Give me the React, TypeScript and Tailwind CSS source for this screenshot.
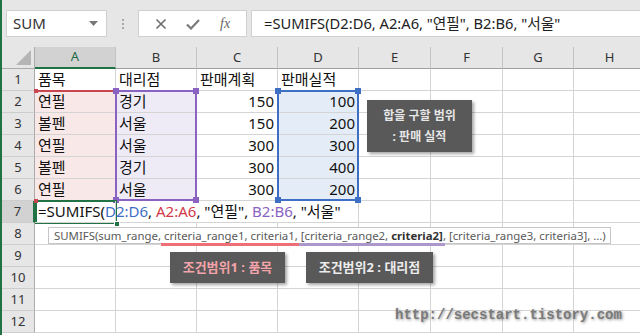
import React from "react";

const colW = ["w-[81px]", "w-[81px]", "w-[81px]", "w-[81px]", "w-[72px]", "w-[72px]", "w-[71px]", "w-[72px]"];
const letters = ["A", "B", "C", "D", "E", "F", "G", "H"];

const fills = ["bg-[#f9e8e8]", "bg-[#efebf6]", "", "bg-[#e4ecf7]"];

const data: string[][] = [
  ["품목", "대리점", "판매계획", "판매실적"],
  ["연필", "경기", "150", "100"],
  ["볼펜", "서울", "150", "200"],
  ["연필", "서울", "300", "300"],
  ["볼펜", "경기", "300", "400"],
  ["연필", "서울", "300", "200"],
];

const cellFont = { fontFamily: '"Noto Sans", "Noto Sans CJK KR", sans-serif' };

function FormulaText() {
  return (
    <>
      =SUMIFS(<span className="text-[#3f6fc4]">D2:D6</span>,{" "}
      <span className="text-[#d2384a]">A2:A6</span>, "연필",{" "}
      <span className="text-[#8a63c2]">B2:B6</span>, "서울"
    </>
  );
}

// coloured range outline with the four corner handles
function RangeBox({ className, handle }: { className: string; handle: string }) {
  return (
    <div className={"absolute border-2 " + className}>
      <span className={"absolute -left-[4px] -top-[4px] w-[6px] h-[6px] " + handle} />
      <span className={"absolute -right-[4px] -top-[4px] w-[6px] h-[6px] " + handle} />
      <span className={"absolute -right-[4px] -bottom-[4px] w-[6px] h-[6px] " + handle} />
      <span className={"absolute -left-[4px] -bottom-[4px] w-[6px] h-[6px] " + handle} />
    </div>
  );
}

function Row({ r }: { r: number }) {
  const vals = data[r - 1];
  const active = r === 7;
  return (
    <div className="flex h-[22px]">
      <div
        className={
          "w-[33px] shrink-0 flex items-center justify-center text-[13px] text-[#333] border-b border-[#cdcdcd] " +
          (active ? "bg-[#d2d2d2] border-r-2 border-r-[#217346]" : "bg-[#e6e6e6] border-r border-r-[#ababab]")
        }
      >
        {r}
      </div>
      {colW.map((w, c) => {
        const numeric = c >= 2 && r > 1;
        const fill = r >= 2 && r <= 6 ? fills[c] || "" : "";
        const noRight = active && (c === 1 || c === 2);
        return (
          <div
            key={c}
            className={
              w +
              " shrink-0 h-[22px] border-b border-[#d4d4d4] flex items-center px-[3px] text-[15px] text-[#111] whitespace-nowrap " +
              (noRight ? "" : "border-r ") +
              fill +
              (numeric ? " justify-end" : "") +
              (active && c === 0 ? " relative z-10 overflow-visible" : " overflow-hidden")
            }
          >
            {vals && c < 4 ? vals[c] : null}
            {active && c === 0 ? (
              <span className="relative z-10">
                <FormulaText />
              </span>
            ) : null}
          </div>
        );
      })}
    </div>
  );
}

export default function App() {
  const rows = Array.from({ length: 12 }, (_, i) => i + 1);
  return (
    <div className="w-[640px] h-[335px] overflow-hidden flex bg-white" style={cellFont}>
      <div className="w-[2px] shrink-0 bg-[#217346]" />
      <div className="flex-1 flex flex-col min-w-0">
        {/* formula bar */}
        <div className="h-[47px] shrink-0 bg-[#e6e6e6] flex items-start pt-[10px]">
          <div className="ml-[4px] w-[101px] h-[27px] bg-white border border-[#d0d0d0] flex items-center justify-between pl-[6px] pr-[8px]">
            <span className="text-[15px] text-[#333]">SUM</span>
            <svg width="9" height="5" viewBox="0 0 9 5">
              <path d="M0 0h9L4.5 5z" fill="#777" />
            </svg>
          </div>
          <div className="w-[31px] h-[27px] flex flex-col items-center justify-center gap-[2px]">
            <span className="w-[2px] h-[2px] bg-[#a8a8a8]" />
            <span className="w-[2px] h-[2px] bg-[#a8a8a8]" />
            <span className="w-[2px] h-[2px] bg-[#a8a8a8]" />
          </div>
          <div className="w-[109px] h-[27px] bg-white border border-[#d0d0d0] flex items-center justify-around px-[6px]">
            <svg width="12" height="12" viewBox="0 0 12 12">
              <path d="M1.5 1.5l9 9M10.5 1.5l-9 9" stroke="#6d6d6d" strokeWidth="1.6" />
            </svg>
            <svg width="14" height="12" viewBox="0 0 14 12">
              <path d="M1 6.5l4 4L13 2" stroke="#7a7a7a" strokeWidth="2.2" fill="none" />
            </svg>
            <span className="text-[14px] italic text-[#666]" style={{ fontFamily: '"Liberation Serif", serif' }}>
              fx
            </span>
          </div>
          <div className="ml-[4px] flex-1 h-[27px] bg-white border-y border-l border-[#d0d0d0] flex items-center pl-[12px] text-[14.7px] text-[#222] whitespace-nowrap">
            =SUMIFS(D2:D6, A2:A6, "연필", B2:B6, "서울"
          </div>
        </div>

        {/* grid */}
        <div className="relative">
          <div className="flex h-[22px] bg-[#e6e6e6]">
            <div className="w-[33px] shrink-0 border-r border-b border-[#ababab] flex items-end justify-end p-[3px]">
              <svg width="15" height="15" viewBox="0 0 15 15">
                <path d="M15 0V15H0z" fill="#b5b5b5" />
              </svg>
            </div>
            {colW.map((w, c) => (
              <div
                key={c}
                className={
                  w +
                  " shrink-0 flex items-center justify-center text-[13px] border-r border-[#c3c3c3] " +
                  (c === 0
                    ? "bg-[#d2d2d2] text-[#1e6b45] border-b-2 border-b-[#217346]"
                    : "text-[#333] border-b border-b-[#9e9e9e]")
                }
              >
                {letters[c]}
              </div>
            ))}
          </div>
          {rows.map((r) => (
            <Row key={r} r={r} />
          ))}

          {/* range outlines */}
          <div className="absolute left-[33px] top-[43px] w-[81px] h-[2px] bg-[#c9454f]">
            <span className="absolute -left-[1px] -top-[1px] w-[4px] h-[4px] bg-[#c9454f]" />
          </div>
          <RangeBox className="left-[113px] top-[43px] w-[82px] h-[111px] border-[#8a63c2]" handle="bg-[#8a63c2]" />
          <RangeBox className="left-[275px] top-[43px] w-[82px] h-[111px] border-[#3f6fc4]" handle="bg-[#3f6fc4]" />

          {/* active cell A7 */}
          <div className="absolute left-[33px] top-[153px] w-[82px] h-[24px] border-2 border-[#217346]">
            <span className="absolute -left-[3px] -top-[3px] w-[4px] h-[4px] bg-[#c9454f]" />
            <span className="absolute -right-[5px] -bottom-[5px] w-[6px] h-[6px] bg-[#217346] border border-white z-20" />
          </div>

          {/* function tooltip */}
          <div className="absolute left-[46px] top-[180px] w-[563px] h-[17px] bg-white border border-[#c6c6c6] flex items-stretch pl-[5px] text-[11.4px] text-[#5a5a5a] whitespace-pre z-20">
            <span className="flex items-center">SUMIFS(sum_range,{"\u00a0"}</span>
            <span className="relative flex items-center">
              criteria_range1, criteria1,
              <span className="absolute -left-[3px] -right-[1px] -bottom-[3px] h-[3px] bg-[#ee7076]" />
            </span>
            <span className="relative flex items-center ml-[3px]">
              [criteria_range2, <b className="font-bold text-[#333]">criteria2]</b>
              <span className="absolute -left-[2px] -right-[2px] -bottom-[3px] h-[3px] bg-[#ab97cb]" />
            </span>
            <span className="flex items-center">, [criteria_range3, criteria3], ...)</span>
          </div>

          {/* callouts */}
          <div className="absolute left-[365px] top-[53px] w-[105px] h-[52px] bg-[#595959] shadow-[2px_2px_3px_rgba(0,0,0,0.35)] flex flex-col items-center justify-center text-[12px] font-bold text-[#e6e6e6] leading-[21px] z-30">
            <span>합을 구할 범위</span>
            <span>: 판매 실적</span>
          </div>
          <div className="absolute left-[168px] top-[205px] w-[115px] h-[31px] bg-[#595959] shadow-[2px_2px_3px_rgba(0,0,0,0.35)] flex items-center justify-center text-[13px] font-bold text-[#f3a3a9] z-30">
            조건범위1 : 품목
          </div>
          <div className="absolute left-[304px] top-[205px] w-[127px] h-[31px] bg-[#595959] shadow-[2px_2px_3px_rgba(0,0,0,0.35)] flex items-center justify-center text-[13px] font-bold text-[#ececec] z-30">
            조건범위2 : 대리점
          </div>

          {/* watermark */}
          <div
            className="absolute left-[393px] top-[258px] text-[14px] font-bold text-[#7a7a7a] whitespace-nowrap z-30 [text-shadow:1px_1px_3px_rgba(0,0,0,0.45)]"
            style={{ fontFamily: '"Liberation Mono", monospace' }}
          >
            http://secstart.tistory.com
          </div>
        </div>
      </div>
    </div>
  );
}
